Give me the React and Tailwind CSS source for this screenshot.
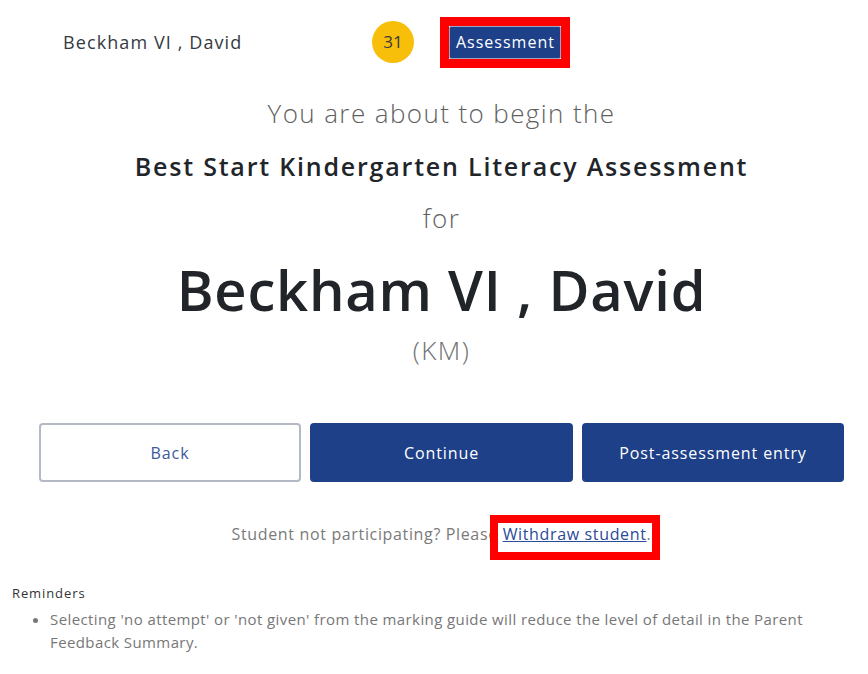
import React from "react";

const font = { fontFamily: '"Open Sans", "Liberation Sans", sans-serif' };

function Header() {
  return (
    <div className="flex items-center h-[84px] pl-[48px]">
      <div className="w-[309px] text-[18px] text-[#343a40] tracking-[1.1px]">Beckham VI , David</div>
      <div className="w-[42px] h-[42px] rounded-full bg-[#f7be0a] flex items-center justify-center text-[17px] text-[#3a3a3a]">
        31
      </div>
      <div className="ml-[26px] border-[9px] border-[#ff0000] flex">
        <div className="bg-[#1e4088] text-white text-[16px] tracking-[1px] pl-[6px] pr-[5px] h-[33px] flex items-center rounded-[2px] border border-[#9aa6c4]">
          Assessment
        </div>
      </div>
    </div>
  );
}

function App() {
  return (
    <div className="w-[868px] h-[674px] bg-white pl-[15px] overflow-hidden" style={font}>
      <Header />
      <div className="flex flex-col items-center">
        <p className="text-[26px] font-light text-[#5f5f5f] tracking-[1.4px] mt-[9px] leading-[40px]">
          You are about to begin the
        </p>
        <p className="text-[25px] font-semibold text-[#212529] tracking-[1.8px] mt-[13px] leading-[40px]">
          Best Start Kindergarten Literacy Assessment
        </p>
        <p className="text-[26px] font-light text-[#5f5f5f] tracking-[1.4px] mt-[12px] leading-[40px]">for</p>
        <h1 className="text-[56px] font-semibold text-[#212529] tracking-[0.8px] mt-[16px] leading-[70px]">
          Beckham VI , David
        </h1>
        <p className="text-[26px] font-light text-[#707070] tracking-[1.5px] mt-[6px] leading-[40px]">(KM)</p>
      </div>
      <div className="flex gap-[9px] pl-[24px] mt-[53px]">
        <button className="w-[262px] h-[59px] rounded-[4px] border-2 border-[#b4b9c6] bg-white text-[#3d5a9e] text-[16px] tracking-[0.9px]">
          Back
        </button>
        <button className="w-[263px] h-[59px] rounded-[4px] bg-[#1e4088] text-white text-[16px] font-medium tracking-[0.9px]">
          Continue
        </button>
        <button className="w-[262px] h-[59px] rounded-[4px] bg-[#1e4088] text-white text-[16px] font-medium tracking-[0.9px]">
          Post-assessment entry
        </button>
      </div>
      <div className="text-center mt-[40px] text-[16px] text-[#7a7a7a] tracking-[0.65px]">
        Student not participating? Please{" "}
        <span className="relative">
          <a className="text-[#2a4a9a] underline">Withdraw student</a>
          <span className="absolute left-[-13px] right-[-13px] top-[-8px] bottom-[-15px] border-[8px] border-[#ff0000]"></span>
        </span>
        .
      </div>
      <div className="ml-[-3px] mt-[38px] text-[13px] text-[#333] tracking-[0.9px]">Reminders</div>
      <ul className="list-disc ml-[35px] mt-[4px] pr-[8px] text-[15px] text-[#777] leading-[23px] tracking-[0.4px]">
        <li>
          Selecting 'no attempt' or 'not given' from the marking guide will reduce the level of detail in the Parent Feedback
          Summary.
        </li>
      </ul>
    </div>
  );
}

export default App;
